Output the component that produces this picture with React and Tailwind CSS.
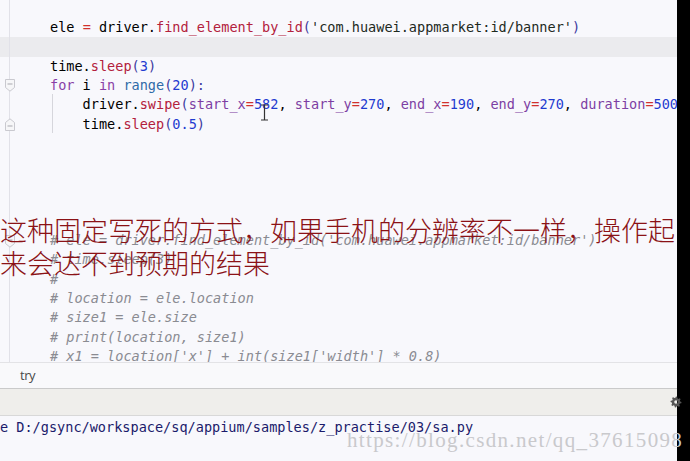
import React from "react";

const C = {
  op: "text-[#d0312d]",
  m: "text-[#b3213c]",
  n: "text-[#1f3bd0]",
  k: "text-[#8a3fa6]",
  b: "text-[#2f6aa8]",
  a: "text-[#7d3ea3]",
  p: "text-[#3d3aa0]",
  s: "text-[#1e2a1e]",
};

function T({ c, children }) {
  return <span className={c ? C[c] : ""}>{children}</span>;
}

function Fold({ up, top }) {
  return (
    <div className="absolute left-[4px]" style={{ top }}>
      <svg width="12" height="13" viewBox="0 0 12 13">
        {up ? (
          <path d="M1.5 12.5 V4.5 L6 0.8 L10.5 4.5 V12.5 Z" fill="#f6f6f8" stroke="#c9c9cf" strokeWidth="1" />
        ) : (
          <path d="M1.5 0.5 V8.5 L6 12.2 L10.5 8.5 V0.5 Z" fill="#f6f6f8" stroke="#c9c9cf" strokeWidth="1" />
        )}
        <line x1="3.5" x2="8.5" y1={up ? 8 : 5} y2={up ? 8 : 5} stroke="#a9a9b0" strokeWidth="1" />
      </svg>
    </div>
  );
}

function Line({ children, hl }) {
  return (
    <div className={"h-[19.36px] leading-[19.36px] whitespace-pre pl-[50px] " + (hl ? "bg-[#ebebee]" : "")}>
      {children}
    </div>
  );
}

function Cm({ children }) {
  return (
    <Line>
      <span className="italic text-[#8a8b92]">{children}</span>
    </Line>
  );
}

export default function App() {
  const mono = { fontFamily: '"DejaVu Sans Mono", "Liberation Mono", monospace' };
  return (
    <div className="flex w-[690px] h-[461px] overflow-hidden bg-[#f8f8fc]">
      <div className="flex flex-col w-[677px] h-full">
        {/* Editor */}
        <div className="relative h-[362px] overflow-hidden bg-[#f8f8fc] text-[13.55px] text-black" style={mono}>
          <div className="absolute left-[9px] top-0 bottom-0 w-px bg-[#e1e1e8]" />
          <div className="absolute left-[52px] top-[94px] h-[39px] w-px bg-[#d6d6dc]" />
          <Fold top={79} />
          <Fold up top={118} />
          <Fold top={235} />
          <div className="pt-[18px]">
            <Line>
              <T>ele </T><T c="op">=</T><T> driver.</T><T c="m">find_element_by_id</T><T c="p">(</T>
              <T c="s">'com.huawei.appmarket:id/banner'</T><T c="p">)</T>
            </Line>
            <Line hl> </Line>
            <Line>
              <T>time.</T><T c="m">sleep</T><T c="p">(</T><T c="n">3</T><T c="p">)</T>
            </Line>
            <Line>
              <T c="k">for</T><T> i </T><T c="k">in</T><T> </T><T c="b">range</T><T c="p">(</T><T c="n">20</T><T c="p">):</T>
            </Line>
            <Line>
              <T>    driver.</T><T c="m">swipe</T><T c="p">(</T>
              <T c="a">start_x</T><T c="op">=</T><T c="n">582</T><T>, </T>
              <T c="a">start_y</T><T c="op">=</T><T c="n">270</T><T>, </T>
              <T c="a">end_x</T><T c="op">=</T><T c="n">190</T><T>, </T>
              <T c="a">end_y</T><T c="op">=</T><T c="n">270</T><T>, </T>
              <T c="a">duration</T><T c="op">=</T><T c="n">500</T>
            </Line>
            <Line>
              <T>    time.</T><T c="m">sleep</T><T c="p">(</T><T c="n">0.5</T><T c="p">)</T>
            </Line>
            <Line> </Line>
            <Line> </Line>
            <Line> </Line>
            <Line> </Line>
            <Line> </Line>
            <Cm># ele = driver.find_element_by_id('com.huawei.appmarket:id/banner')</Cm>
            <Cm># time.sleep(3)</Cm>
            <Cm>#</Cm>
            <Cm># location = ele.location</Cm>
            <Cm># size1 = ele.size</Cm>
            <Cm># print(location, size1)</Cm>
            <Cm># x1 = location['x'] + int(size1['width'] * 0.8)</Cm>
          </div>
          {/* text cursor */}
          <svg className="absolute left-[260px] top-[104px]" width="9" height="17" viewBox="0 0 9 17">
            <path d="M1 1 H8 M4.5 1 V16 M1 16 H8" stroke="#333" strokeWidth="1.2" fill="none" />
          </svg>
          {/* overlay caption */}
          <div
            className="absolute left-0 top-[213px] text-[27px] leading-[33px] text-[#8b1216] whitespace-nowrap"
            style={{ fontFamily: '"Noto Sans CJK SC", sans-serif', fontWeight: 300 }}
          >
            <div>这种固定写死的方式，如果手机的分辨率不一样，操作起</div>
            <div>来会达不到预期的结果</div>
          </div>
        </div>
        {/* Tab bar */}
        <div className="h-[27px] border-t border-[#e3e3e6] border-b border-b-[#cacaca] bg-[#f9f9fb] flex items-center pl-[20px]">
          <span className="text-[13px] text-[#4a4a4a] tracking-[-0.5px]" style={{ fontFamily: '"Open Sans", sans-serif' }}>
            try
          </span>
        </div>
        {/* Tool bar */}
        <div className="relative h-[27px] bg-[#efeeeb] border-b border-[#d8d8d8] flex items-center justify-end">
          <svg className="mr-[-5px]" width="12" height="12" viewBox="0 0 12 12">
            <path
              d="M6 0.5 L7.2 0.8 L7.4 2.3 L8.4 2.9 L9.8 2.2 L10.6 3.2 L9.9 4.5 L10.2 5.5 L11.5 6 L11.3 7.3 L9.8 7.6 L9.3 8.6 L9.9 9.9 L8.9 10.7 L7.6 10 L6.6 10.3 L6 11.5 L4.8 11.3 L4.5 9.8 L3.5 9.3 L2.2 9.9 L1.4 8.9 L2.1 7.6 L1.8 6.6 L0.5 6 L0.7 4.7 L2.2 4.4 L2.7 3.4 L2.1 2.1 L3.1 1.3 L4.4 2 L5.4 1.7 Z M6 4.2 A1.8 1.8 0 1 0 6 7.8 A1.8 1.8 0 1 0 6 4.2 Z"
              fill="#555"
              fillRule="evenodd"
            />
          </svg>
        </div>
        {/* Console */}
        <div className="relative flex-1 bg-[#f8f8fc]">
          <div className="pt-[2px] text-[13.55px] leading-[19px] text-[#1b1b6b] whitespace-pre" style={mono}>
            e D:/gsync/workspace/sq/appium/samples/z_practise/03/sa.py
          </div>
          <div
            className="absolute left-[347px] top-[11px] text-[21px] leading-[26px] text-[#c9c9cc] whitespace-nowrap tracking-[1.35px]"
            style={{ fontFamily: '"Liberation Serif", serif' }}
          >
            https://blog.csdn.net/qq_37615098
          </div>
        </div>
      </div>
      <div className="w-[13px] h-full bg-black" />
    </div>
  );
}
